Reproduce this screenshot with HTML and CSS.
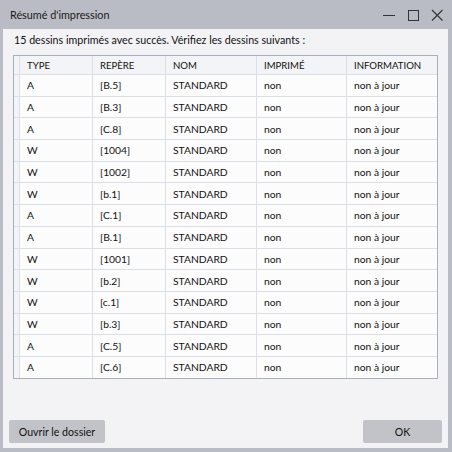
FILE: index.html
```html
<!DOCTYPE html>
<html lang="fr">
<head>
  <meta charset="UTF-8">
  <title>Résumé d'impression</title>
  <link rel="stylesheet" href="styles.css">
</head>
<body>
  <div class="window">
    <div class="titlebar">
      <span class="title">Résumé d'impression</span>
      <div class="controls">
        <svg class="ctl" width="14" height="14" viewBox="0 0 14 14"><line x1="1" y1="7.5" x2="13" y2="7.5" stroke="#333" stroke-width="1"/></svg>
        <svg class="ctl" width="14" height="14" viewBox="0 0 14 14"><rect x="2.5" y="2.5" width="10" height="10" fill="none" stroke="#333" stroke-width="1"/></svg>
        <svg class="ctl" width="14" height="14" viewBox="0 0 14 14"><path d="M2 2 L12.5 12.5 M12.5 2 L2 12.5" stroke="#333" stroke-width="1.1"/></svg>
      </div>
    </div>

    <div class="content">
      <p class="message">15 dessins imprimés avec succès. Vérifiez les dessins suivants :</p>

      <table class="grid">
        <colgroup>
          <col style="width:6px">
          <col style="width:73px">
          <col style="width:73px">
          <col style="width:91px">
          <col style="width:90px">
          <col style="width:90px">
        </colgroup>
        <thead>
          <tr>
            <th class="stub"></th>
            <th>TYPE</th>
            <th>REPÈRE</th>
            <th>NOM</th>
            <th>IMPRIMÉ</th>
            <th>INFORMATION</th>
          </tr>
        </thead>
        <tbody id="rows"></tbody>
      </table>

      <div class="spacer"></div>

      <div class="buttons">
        <button>Ouvrir le dossier</button>
        <button class="ok">OK</button>
      </div>
    </div>
  </div>

  <script>
    const drawings = [
      ['A', '[B.5]'], ['A', '[B.3]'], ['A', '[C.8]'], ['W', '[1004]'],
      ['W', '[1002]'], ['W', '[b.1]'], ['A', '[C.1]'], ['A', '[B.1]'],
      ['W', '[1001]'], ['W', '[b.2]'], ['W', '[c.1]'], ['W', '[b.3]'],
      ['A', '[C.5]'], ['A', '[C.6]']
    ];
    const tbody = document.getElementById('rows');
    drawings.forEach(d => {
      const tr = document.createElement('tr');
      tr.innerHTML = '<td class="stub"></td><td>' + d[0] + '</td><td>' + d[1] +
        '</td><td>STANDARD</td><td>non</td><td>non à jour</td>';
      tbody.appendChild(tr);
    });
  </script>
</body>
</html>
```

FILE: styles.css
```css
body {
  margin: 0;
  font-family: Lato, "Open Sans", sans-serif;
  font-size: 10.7px;
  color: #111;
}
.window {
  width: 452px;
  height: 452px;
  box-sizing: border-box;
  background: #b9bcc4;
  padding: 0 4px 4px 3px;
  display: flex;
  flex-direction: column;
}
.titlebar {
  height: 29px;
  display: flex;
  align-items: center;
  justify-content: space-between;
}
.title {
  padding-left: 7px;
  font-size: 10.8px;
  color: #1a1a1a;
}
.controls {
  display: flex;
  gap: 10px;
  padding-right: 4px;
}
.ctl {
  display: block;
}
.content {
  flex: 1;
  background: #f3f3f5;
  display: flex;
  flex-direction: column;
  padding: 0 6px 5px 6px;
}
.message {
  margin: 4px 0 0 5px;
  height: 22px;
  line-height: 14px;
}
.grid {
  margin: 0 4px;
  table-layout: fixed;
  width: 425px;
  border-collapse: separate;
  border-spacing: 0;
  border: 1px solid #a9b0bd;
  background: #fcfcfd;
}
.grid th,
.grid td {
  border-right: 1px solid #dcdfe5;
  border-bottom: 1px solid #dcdfe5;
  padding: 0 0 0 7px;
  text-align: left;
  white-space: nowrap;
  overflow: hidden;
}
.grid th:last-child,
.grid td:last-child {
  border-right: none;
}
.grid th {
  height: 18px;
  font-weight: normal;
  font-size: 9.6px;
  background: #f3f4f7;
}
.grid td {
  height: 20.7px;
  font-size: 10.3px;
}
.grid tbody tr:last-child td {
  border-bottom: none;
}
.grid .stub {
  padding: 0;
  background: #f3f4f7;
}
.spacer {
  flex: 1;
}
.buttons {
  display: flex;
  justify-content: space-between;
}
button {
  font-family: inherit;
  font-size: 10.6px;
  color: #111;
  background: #c1c3c9;
  border: none;
  border-radius: 2px;
  height: 23px;
  width: 96px;
  padding: 0;
}
button.ok {
  width: 79px;
}
```
